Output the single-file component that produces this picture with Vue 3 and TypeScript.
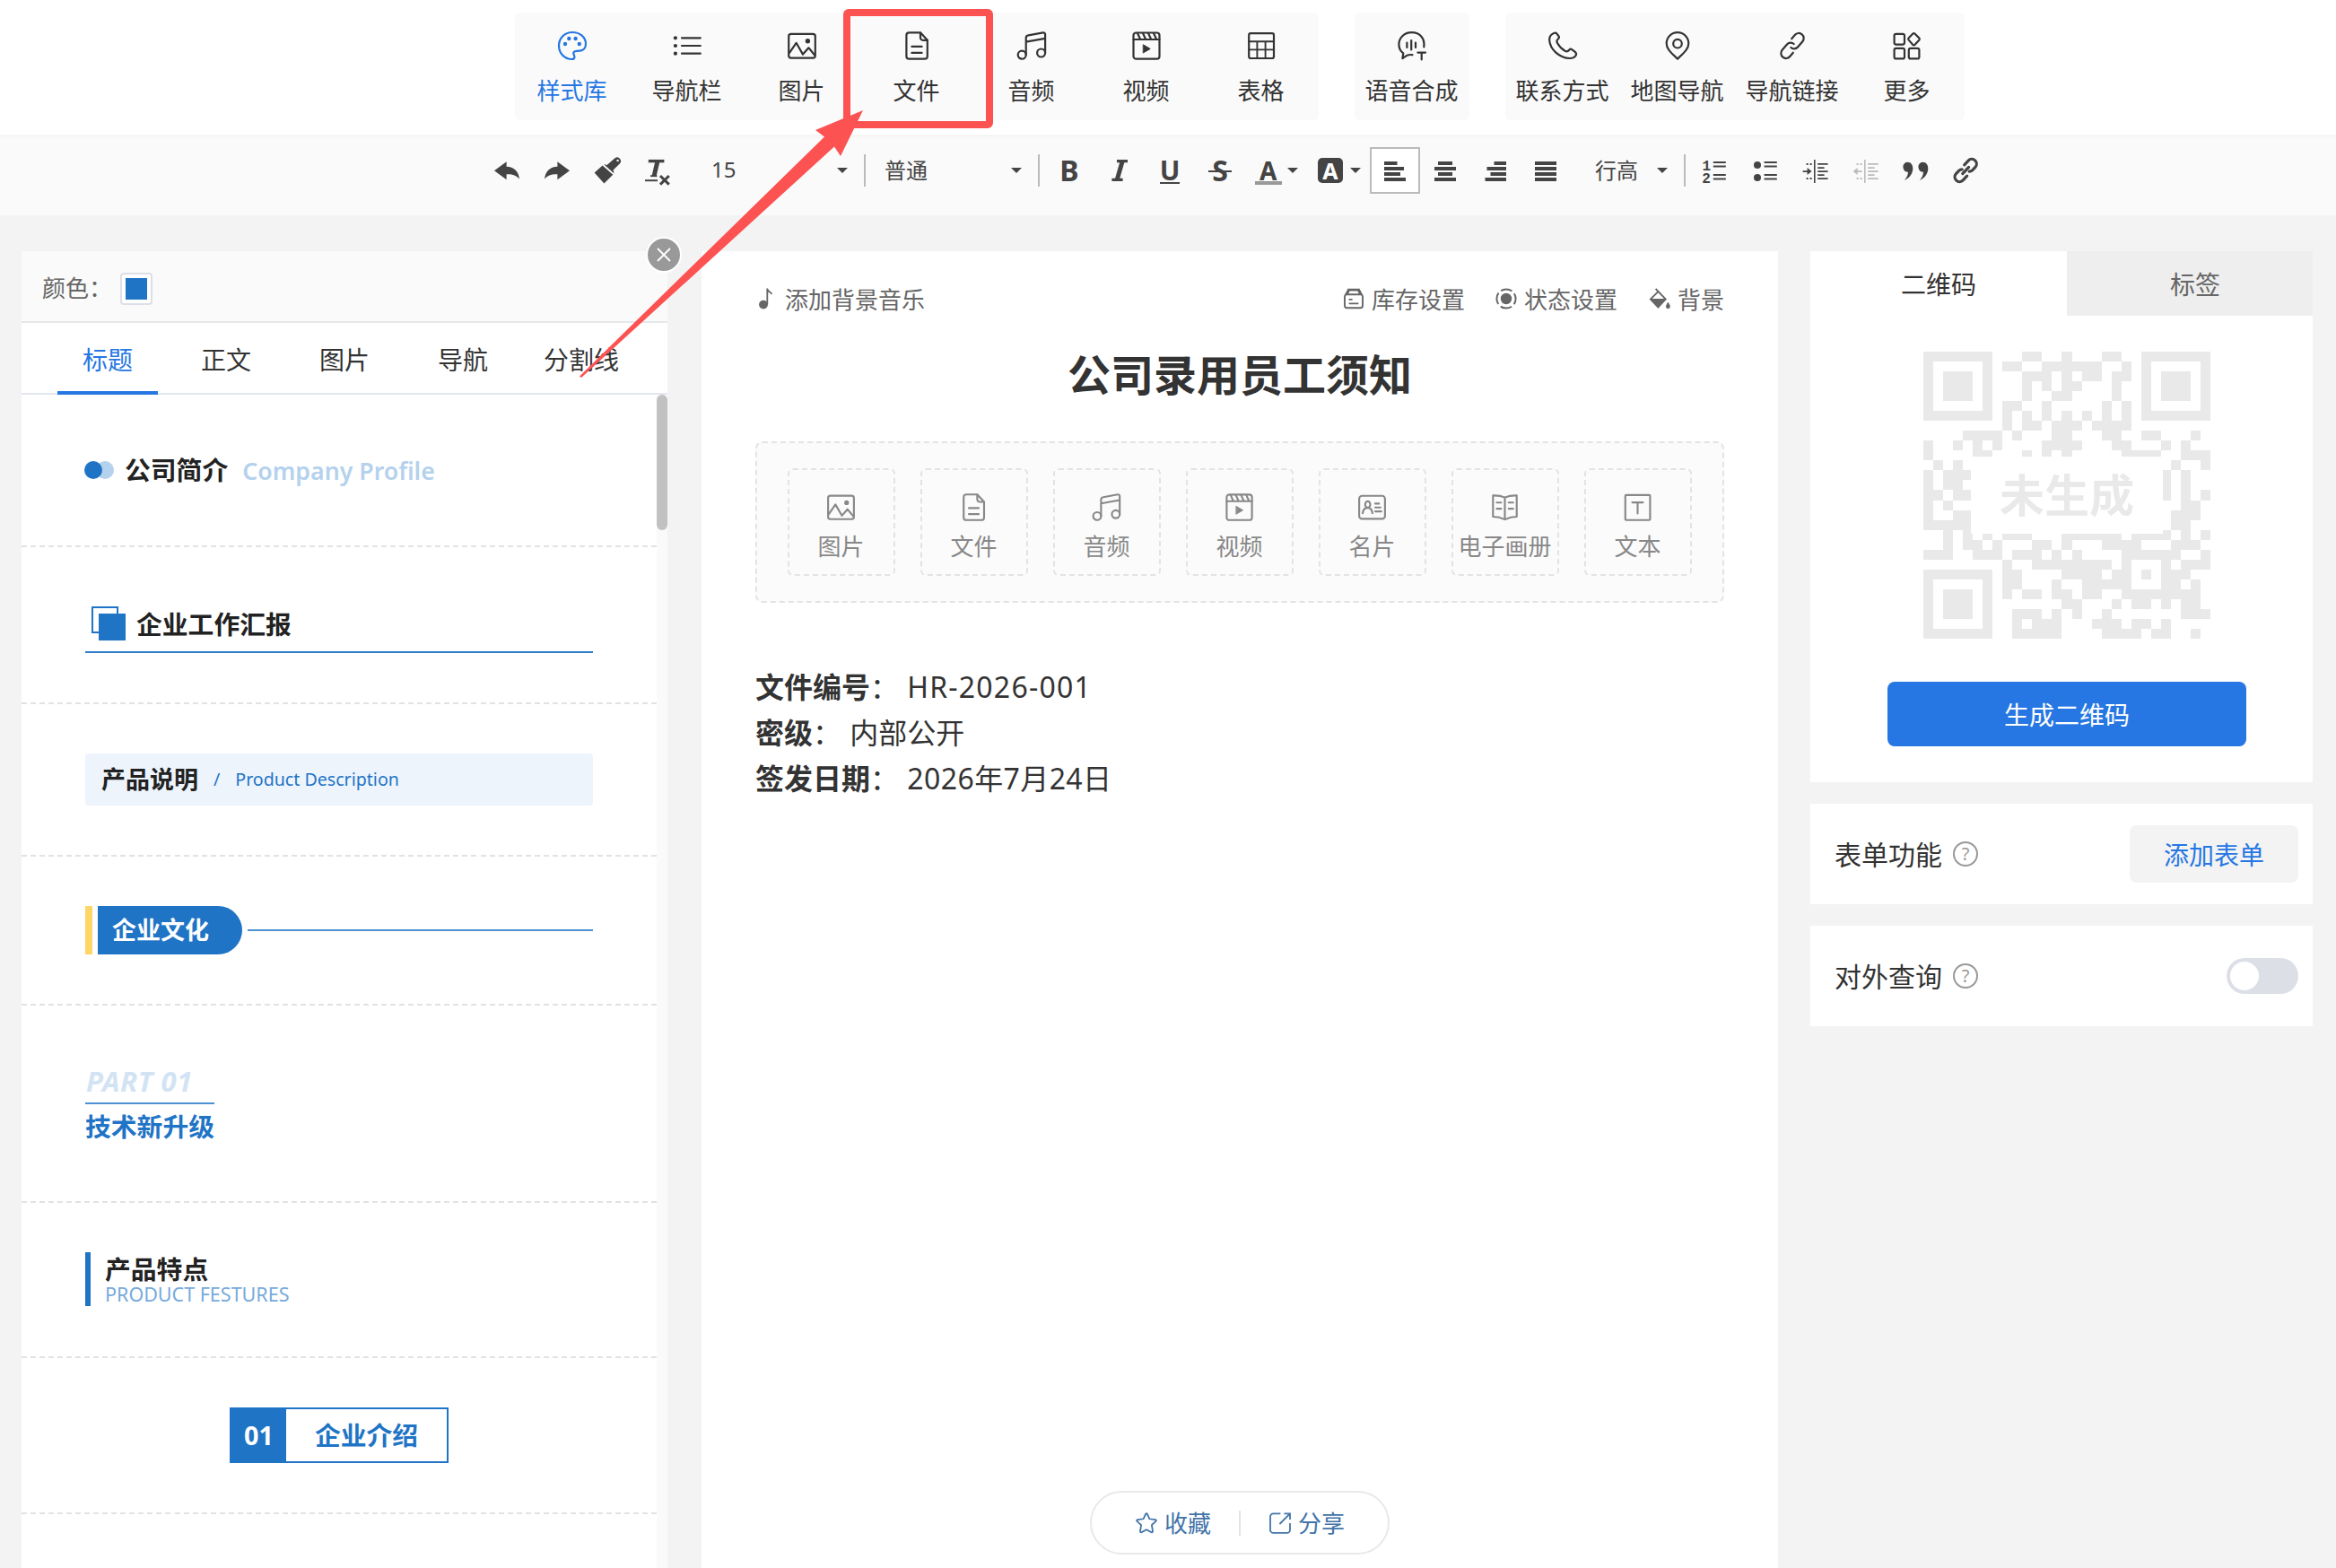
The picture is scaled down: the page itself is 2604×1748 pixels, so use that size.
<script setup lang="ts">
import { ref } from 'vue'

interface Tool { icon: string; label: string; active?: boolean }

const toolGroups: Tool[][] = [
  [
    { icon: 'palette', label: '样式库', active: true },
    { icon: 'list', label: '导航栏' },
    { icon: 'image', label: '图片' },
    { icon: 'file', label: '文件' },
    { icon: 'music', label: '音频' },
    { icon: 'video', label: '视频' },
    { icon: 'table', label: '表格' },
  ],
  [{ icon: 'voice', label: '语音合成' }],
  [
    { icon: 'phone', label: '联系方式' },
    { icon: 'pin', label: '地图导航' },
    { icon: 'link', label: '导航链接' },
    { icon: 'more', label: '更多' },
  ],
]

const blocks: Tool[] = [
  { icon: 'image', label: '图片' },
  { icon: 'file', label: '文件' },
  { icon: 'music', label: '音频' },
  { icon: 'video', label: '视频' },
  { icon: 'card', label: '名片' },
  { icon: 'book', label: '电子画册' },
  { icon: 'textbox', label: '文本' },
]

// Stroke icons on a 36 × 36 grid
const icons: Record<string, string> = {
  palette:
    '<path d="M17.5 33C9 33 3 26 3 18C3 9.5 9.5 3 18 3C26.5 3 33 8.5 33 16C33 21 29.5 23.4 26 23.6C22 23.8 19 24.4 19.3 26.5C19.6 28.5 20.6 29 20.4 31C20.2 32.3 19.2 33 17.5 33Z"/><g fill="currentColor" stroke="none"><circle cx="14.3" cy="10" r="2.2"/><circle cx="21.6" cy="10" r="2.2"/><circle cx="10" cy="16" r="2.2"/><circle cx="25.8" cy="16" r="2.2"/></g>',
  list: '<path d="M12 9.3H32.8M12 18H32.8M12 26.7H32.8"/><g fill="currentColor" stroke="none"><circle cx="4.9" cy="9.3" r="2.1"/><circle cx="4.9" cy="18" r="2.1"/><circle cx="4.9" cy="26.7" r="2.1"/></g>',
  image:
    '<rect x="3.2" y="4.8" width="29.6" height="26.8" rx="2.6"/><path d="M4.2 25.6L11.6 14.8L19 27.6L25.4 20.3L32 28.2"/><circle cx="24.4" cy="12.8" r="2.7" fill="currentColor" stroke="none"/>',
  file: '<path d="M22 3.3H9.4a3 3 0 0 0-3 3v23.4a3 3 0 0 0 3 3h17.4a3 3 0 0 0 3-3V11.8z"/><path d="M22 3.6V9a2.8 2.8 0 0 0 2.8 2.8h4.8M12.4 18.9H23.6M12.4 25.9H23.6"/>',
  music:
    '<circle cx="7.2" cy="28.2" r="4.5"/><circle cx="28.6" cy="26" r="4.5"/><path d="M11.7 28V9.4a3 3 0 0 1 2.6-3L30.8 3.4a2 2 0 0 1 2.3 2V26M11.7 13.6L33 9.8"/>',
  video:
    '<rect x="3.5" y="3.5" width="29" height="29.2" rx="3"/><path d="M3.5 11H32.5M8 4l3 6.5M14 4l3 6.5M20 4l3 6.5M26 4l3 6.5"/><path d="M14.6 17L22.2 21.4L14.6 25.8Z" fill="currentColor" stroke-width="1"/>',
  table:
    '<rect x="4.2" y="4.2" width="27.8" height="27.8" rx="2"/><path d="M4.2 13.2H32M4.2 22.4H32M13.4 13.2V32M22.6 13.2V32" stroke-width="1.9"/>',
  voice:
    '<path d="M31.3 19.3C32.5 10 27 3.2 17.6 3.2C9 3.2 3.4 9.5 3.4 16.5C3.4 20.5 5.2 24 8.3 26.4L7.4 32.2L12.6 28.7Q15.5 27.6 18.4 28.2M12.4 14.6v5.4M17.2 12v10.4M22 14.6v5.4"/><path d="M24.4 25.6H33M28.7 25.6V33.4"/>',
  phone:
    '<path d="M6.5 4.9C4 6.5 3 9 3.2 12C4 22 14 31.5 26 32C29 32 31.5 31 32.8 28.5C33.5 27 32.5 25.5 31.5 24.7L28.5 22.3C27.3 21.4 26 21.7 25.2 22.7C24 24.2 22.5 24.8 20.5 23.8C16.5 21.5 14 18.5 12 15C11 13 11.5 11.5 12.8 10.5C14 9.6 14.2 8.3 13.3 7L11.5 4.6C10.3 3.2 8.3 3.6 6.5 4.9Z"/>',
  pin: '<path d="M18 32.6C12 26.8 5.7 22 5.7 15.4a12.3 12.3 0 0 1 24.6 0C30.3 22 24 26.8 18 32.6Z"/><circle cx="18" cy="15.7" r="4.8"/>',
  link: '<g transform="rotate(-50 18 18)"><path d="M12.6 23.6H7a5.6 5.6 0 0 1 0-11.2H15a5.6 5.6 0 0 1 5.6 5.6M23.4 12.4H29a5.6 5.6 0 0 1 0 11.2H21a5.6 5.6 0 0 1-5.6-5.6"/></g>',
  more: '<rect x="3.6" y="4.8" width="11.4" height="11.8" rx="2"/><rect x="3.6" y="20.8" width="11.4" height="11.6" rx="2"/><rect x="19.8" y="20.8" width="11.6" height="11.6" rx="2"/><path d="M24.4 4.6a1.4 1.4 0 0 1 2 0L31.5 9.6a1.4 1.4 0 0 1 0 1.8L26.4 17a1.4 1.4 0 0 1-2 0L19.5 11.4a1.4 1.4 0 0 1 0-1.8Z"/>',
  card: '<rect x="3.2" y="4.9" width="29.6" height="26.4" rx="3.4"/><ellipse cx="13" cy="14.8" rx="2.9" ry="3.6"/><path d="M7.2 24.9C7.6 21 9.6 18.6 13 18.6C16.2 18.6 18 21 18.4 24.9M21.6 13.8H26M21.6 18.2H27.6M21.6 22.8H28.6"/>',
  book: '<path d="M18 6.8C14 5 9 4.3 4.4 4.5V28.8C9.5 28.8 14 30 18 32C22 30 26.5 28.8 31.6 28.8V4.5C27 4.3 22 5 18 6.8ZM18 6.8V32M8.6 12.6H13.8M8.6 19.6H13.8M22.4 12.6H27.6M22.4 19.6H27.6"/>',
  textbox:
    '<rect x="3.9" y="4" width="28.4" height="28.6" rx="1"/><path d="M11.8 12.4H24.2M18 12.4V25.2" />',
}

// Solid glyphs of the formatting bar on a 28 × 28 grid
const fmt: Record<string, string> = {
  undo: '<path d="M0 14.3L13.6 4.2V9.8C22 10 27 15 28 23.6C24.5 19.4 20 17.9 13.6 18.2V24.2Z"/>',
  redo: '<path d="M28 14.3L14.4 4.2V9.8C6 10 1 15 0 23.6C3.5 19.4 8 17.9 14.4 18.2V24.2Z"/>',
  brush:
    '<path d="M8.6 8.4L20.3 18.8L10.4 28.4L-.4 16.6Z"/><path d="M10 7L13.6 8L21.6 1Q24.5-2 27.6.4Q30.6 3.4 27.8 6.4L20.6 13.6L21.6 17.6Z"/><circle cx="25.6" cy="2.9" r="1.2" fill="#fafafa"/>',
  clear:
    '<path d="M3.8 3.6H21.4" fill="none" stroke="currentColor" stroke-width="3.4"/><path d="M14 3.6L10 20.6" fill="none" stroke="currentColor" stroke-width="5"/><path d="M6 20.2H13.4" fill="none" stroke="currentColor" stroke-width="1.8"/><path d="M0 25.2H14" fill="none" stroke="currentColor" stroke-width="2"/><path d="M17 20L26.8 29.6M26.8 20L17 29.6" fill="none" stroke="currentColor" stroke-width="3"/>',
  italic:
    '<path d="M11 3.7H23M5.4 24.4H17.6" fill="none" stroke="currentColor" stroke-width="3.2"/><path d="M17.2 3.6L11.2 24.4" fill="none" stroke="currentColor" stroke-width="5"/>',
  left: '<path d="M2 4H16.5V8H2ZM2 10H24V14H2ZM2 16H20V20H2ZM2 22H26V26H2Z"/>',
  center: '<path d="M6 4H22V8H6ZM2 10H26V14H2ZM6 16H22V20H6ZM2 22H26V26H2Z"/>',
  right: '<path d="M12.5 4H26V8H12.5ZM4.5 10H26V14H4.5ZM8.5 16H26V20H8.5ZM2.5 22H26V26H2.5Z"/>',
  justify: '<path d="M2 4H26V8H2ZM2 10H26V14H2ZM2 16H26V20H2ZM2 22H26V26H2Z"/>',
  ol: '<path d="M11.8 4H25.8V6H11.8ZM11.8 8.4H25.8V10.4H11.8ZM11.8 18H25.8V20H11.8ZM11.8 22.4H25.8V24.4H11.8Z"/><g font-family="Liberation Mono, monospace" font-weight="700" font-size="16"><text x="-0.4" y="14.2">1</text><text x="-0.8" y="28.2">2</text></g>',
  ul: '<circle cx="5" cy="8" r="4"/><circle cx="5" cy="22" r="4"/><path d="M12.6 4H26.8V6H12.6ZM12.6 8.4H26.8V10.4H12.6ZM12.6 18H26.8V20H12.6ZM12.6 22.4H26.8V24.4H12.6Z"/>',
  indent:
    '<path d="M12 2H13.6V28H12ZM16.2 6H27.6V7.8H16.2ZM16.2 10.2H23.6V12H16.2ZM16.2 14.2H27.6V16H16.2ZM16.2 18.2H23.6V20H16.2ZM16.2 22.2H27.6V24H16.2Z"/><path d="M-.4 14.2H4.6V11L9.6 15L4.6 19V16H-.4ZM3.6 6H5.6V8H3.6ZM7.6 6H9.6V8H7.6ZM3.6 22H5.6V24H3.6ZM7.6 22H9.6V24H7.6Z"/>',
  outdent:
    '<path d="M12 2H13.6V28H12ZM16.2 6H27.6V7.8H16.2ZM16.2 10.2H23.6V12H16.2ZM16.2 14.2H27.6V16H16.2ZM16.2 18.2H23.6V20H16.2ZM16.2 22.2H27.6V24H16.2Z"/><path d="M9.6 14.2H4.6V11L-.4 15L4.6 19V16H9.6ZM3.6 6H5.6V8H3.6ZM7.6 6H9.6V8H7.6ZM3.6 22H5.6V24H3.6ZM7.6 22H9.6V24H7.6Z"/>',
  quote:
    '<path d="M-.6 9.6a5 5 0 0 1 5-4.8c3.6 0 5.9 2.8 5.9 7c0 6.2-4 11-9.5 13.2c2.4-2.6 4-5.6 4.2-9.3c-3 .6-5.6-2.2-5.6-6.1Z"/><path d="M16.4 9.6a5 5 0 0 1 5-4.8c3.6 0 5.9 2.8 5.9 7c0 6.2-4 11-9.5 13.2c2.4-2.6 4-5.6 4.2-9.3c-3 .6-5.6-2.2-5.6-6.1Z"/>',
  chain:
    '<g transform="translate(-.8 0) rotate(-47 14 14)" fill="none" stroke="currentColor" stroke-width="3.2" stroke-linecap="round"><path d="M10.5 19.3H4a5.3 5.3 0 0 1 0-10.6H8.5a5.3 5.3 0 0 1 3.6 1.6M17.5 8.7H24a5.3 5.3 0 0 1 0 10.6H19.5a5.3 5.3 0 0 1-3.6-1.6M9 14H19"/></g>',
}

// Dark runs of each QR row as [first, last] module columns
const qrRuns: [number, number][][] = [
  [[10, 11], [14, 14], [18, 19]],
  [[8, 9], [12, 17], [20, 20]],
  [[10, 12], [14, 14], [16, 17], [19, 20]],
  [[10, 10], [12, 12], [14, 15], [19, 19]],
  [[10, 10], [13, 14], [19, 19]],
  [[8, 9], [12, 12], [18, 18], [20, 20]],
  [[8, 8], [10, 10], [12, 12], [14, 14], [16, 16], [18, 18], [20, 20]],
  [[8, 8], [10, 11], [13, 15], [17, 20]],
  [[4, 7], [9, 9], [13, 14], [18, 19], [22, 23], [27, 27]],
  [[0, 0], [3, 3], [5, 5], [7, 7], [12, 15], [19, 20], [24, 24], [26, 26]],
  [[0, 0], [5, 6], [10, 10], [12, 12], [14, 14], [20, 23], [26, 28]],
  [[1, 1], [3, 3], [25, 25], [28, 28]],
  [[0, 0], [2, 4], [24, 24], [26, 26]],
  [[0, 0], [2, 3], [24, 24], [26, 26]],
  [[0, 1], [3, 4], [24, 24], [26, 26], [28, 28]],
  [[0, 0], [2, 2], [26, 27]],
  [[0, 0], [3, 4], [25, 27]],
  [[0, 4], [25, 26]],
  [[2, 2], [4, 4], [6, 6], [8, 10], [14, 19], [21, 24], [26, 26], [28, 28]],
  [[2, 2], [4, 5], [7, 7], [11, 12], [14, 14], [18, 21], [25, 27]],
  [[0, 2], [5, 7], [9, 11], [13, 13], [15, 15], [20, 25], [28, 28]],
  [[8, 8], [11, 18], [20, 20], [24, 24], [26, 28]],
  [[8, 9], [14, 17], [19, 20], [22, 22], [24, 26]],
  [[8, 9], [13, 13], [16, 20], [24, 25], [27, 27]],
  [[8, 8], [10, 11], [13, 14], [16, 17], [20, 27]],
  [[14, 15], [19, 19], [21, 22], [24, 24], [26, 27]],
  [[9, 11], [13, 13], [15, 15], [18, 18], [26, 28]],
  [[9, 9], [11, 13], [17, 19], [21, 22], [24, 24]],
  [[9, 13], [18, 21], [23, 24], [27, 27]],
]
const finder = (x: number, y: number) =>
  `M${x} ${y}h7v7h-7zM${x + 1} ${y + 1}v5h5v-5zM${x + 2} ${y + 2}h3v3h-3z`
const qrPath =
  finder(0, 0) + finder(22, 0) + finder(0, 22) +
  qrRuns.map((row, y) => row.map(([a, b]) => `M${a} ${y}h${b - a + 1}v1h-${b - a + 1}z`).join('')).join('')

const styleTabs = ['标题', '正文', '图片', '导航', '分割线']
const activeTab = ref('标题')
const queryOn = ref(false)
</script>

<template>
  <div class="page">
    <header class="tools">
      <div v-for="(group, gi) in toolGroups" :key="gi" class="group">
        <div v-for="t in group" :key="t.label" class="tool" :class="{ active: t.active }">
          <svg class="ico" viewBox="0 0 36 36" v-html="icons[t.icon]"></svg>
          <span>{{ t.label }}</span>
        </div>
      </div>
    </header>

    <div class="format">
      <span v-for="n in ['undo', 'redo', 'brush', 'clear']" :key="n" class="cell"><svg class="f" viewBox="0 0 28 28" v-html="fmt[n]"></svg></span>
      <div class="select size"><span>15</span><i class="caret"></i></div>
      <i class="sep"></i>
      <div class="select para"><span>普通</span><i class="caret"></i></div>
      <i class="sep gap"></i>
      <span class="cell"><b class="glyph">B</b></span>
      <span class="cell"><svg class="f" viewBox="0 0 28 28" v-html="fmt.italic"></svg></span>
      <span class="cell"><b class="glyph u">U</b></span>
      <span class="cell"><b class="glyph s">S</b></span>
      <span class="cell color"><b class="glyph a">A</b><i class="caret"></i></span>
      <span class="cell back"><b class="abox">A</b><i class="caret"></i></span>
      <span v-for="n in ['left', 'center', 'right', 'justify']" :key="n" class="cell" :class="{ on: n === 'left' }"><svg class="f" viewBox="0 0 28 28" v-html="fmt[n]"></svg></span>
      <div class="select lh"><span>行高</span><i class="caret"></i></div>
      <i class="sep gap"></i>
      <span v-for="n in ['ol', 'ul', 'indent', 'outdent', 'quote', 'chain']" :key="n" class="cell" :class="{ off: n === 'outdent' }"><svg class="f" viewBox="0 0 28 28" v-html="fmt[n]"></svg></span>
    </div>

    <main class="body">
      <aside class="library">
        <div class="color-row"><span>颜色：</span><span class="swatch"><i></i></span></div>
        <button class="close" type="button">
          <svg viewBox="0 0 16 16"><path d="M1 1L15 15M15 1L1 15" /></svg>
        </button>
        <nav class="tabs">
          <span v-for="t in styleTabs" :key="t" :class="{ active: t === activeTab }" @click="activeTab = t">{{ t }}</span>
        </nav>
        <div class="scroll">
          <div class="list">
            <section class="st st1">
              <i class="dot"></i><i class="dot pale"></i>
              <b>公司简介</b><em>Company Profile</em>
            </section>
            <section class="st st2">
              <div class="bar">
                <svg viewBox="0 0 38 38"><rect x="1" y="1" width="28" height="28" fill="#fff" stroke="#1f74c6" stroke-width="2" /><rect x="8" y="8" width="30" height="30" fill="#1f74c6" /></svg>
                <b>企业工作汇报</b>
              </div>
            </section>
            <section class="st st3">
              <div class="bar"><b>产品说明</b><i>/</i><span>Product Description</span></div>
            </section>
            <section class="st st4"><i class="y"></i><b>企业文化</b><i class="l"></i></section>
            <section class="st st5">
              <div><em>PART 01</em><b>技术新升级</b></div>
            </section>
            <section class="st st6">
              <div><b>产品特点</b><span>PRODUCT FESTURES</span></div>
            </section>
            <section class="st st7">
              <div><b class="n">01</b><b class="t">企业介绍</b></div>
            </section>
          </div>
          <div class="track"><i></i></div>
        </div>
      </aside>

      <section class="editor">
        <div class="meta">
          <span class="m music">
            <svg viewBox="0 0 16 24"><ellipse cx="5" cy="18.6" rx="5" ry="4.8" /><path d="M8.4 18.6V.4H10C10.4 2.8 13 3.4 15.2 6.2L14 7.4C12.6 5.8 11.4 5 10.2 4.8V18.6Z" /></svg>添加背景音乐</span>
          <span class="m stock">
            <svg viewBox="0 0 24 24"><path d="M5.5.8H18.5L22 7.6H2Z" /><path d="M7.6 3.6H16.4L17.8 6.4H6.2Z" fill="#fff" /><rect x="2" y="7.4" width="20" height="14.8" rx="2.4" fill="none" stroke="currentColor" stroke-width="1.9" /><path d="M6.6 12H10.6V13.8H6.6ZM6.6 16.4H17.4V18.2H6.6Z" /></svg>库存设置</span>
          <span class="m state">
            <svg viewBox="0 0 24 24"><circle cx="12" cy="12" r="6.2" /><circle cx="12" cy="12" r="10.6" fill="none" stroke="currentColor" stroke-width="2" stroke-dasharray="13.05 3.6" stroke-dashoffset="6.52" /></svg>状态设置</span>
          <span class="m bg">
            <svg viewBox="0 0 24 24"><path d="M7.6 1L18.8 12.6L10.4 21.4L1.8 12.6L10.4 4.2" fill="none" stroke="currentColor" stroke-width="1.8" /><path d="M1.2 12H19.6L10.4 22.6Z" /><path d="M21.4 15.8C23 18.2 23.8 19.4 23.8 20.8a2.4 2.4 0 0 1-4.8 0C19 19.4 19.8 18.2 21.4 15.8Z" /></svg>背景</span>
        </div>
        <h1>公司录用员工须知</h1>
        <div class="blocks">
          <div v-for="b in blocks" :key="b.label" class="block">
            <svg class="ico" viewBox="0 0 36 36" v-html="icons[b.icon]"></svg>
            <span>{{ b.label }}</span>
          </div>
        </div>
        <div class="doc">
          <p><b>文件编号</b>：&nbsp;<span class="no">HR-2026-001</span></p>
          <p><b>密级</b>：&nbsp;<span class="level">内部公开</span></p>
          <p><b>签发日期</b>：&nbsp;<span class="date">2026年7月24日</span></p>
        </div>
        <div class="pill">
          <svg viewBox="0 0 24 24"><path d="M11.1 1.8Q12 .4 12.9 1.8L15.4 7.3L21.8 8.2Q23.6 8.6 22.4 10L17.9 14.2L19 20.9Q19 22.7 17.4 22.1L12 19.2L6.6 22.1Q5 22.7 5 20.9L6.1 14.2L1.6 10Q.4 8.6 2.2 8.2L8.6 7.3Z" /></svg>
          <span>收藏</span><i></i>
          <svg viewBox="0 0 24 24"><path d="M12.4 1.4H4.4a3.4 3.4 0 0 0-3.4 3.4V19.4a3.4 3.4 0 0 0 3.4 3.4H19.6a3.4 3.4 0 0 0 3.4-3.4V12M16.4 1.4H23V8M23 1.4L11.4 13" /></svg>
          <span>分享</span>
        </div>
      </section>

      <aside class="side">
        <div class="qr-tabs"><span class="active">二维码</span><span>标签</span></div>
        <div class="qr-card">
          <div class="qr">
            <svg viewBox="0 0 29 29" shape-rendering="crispEdges"><path :d="qrPath" fill="#e9e9e9" fill-rule="evenodd" /></svg>
            <span>未生成</span>
          </div>
          <button class="primary" type="button">生成二维码</button>
        </div>
        <div class="row"><span class="name">表单功能</span><i class="help">?</i><button type="button">添加表单</button></div>
        <div class="row"><span class="name">对外查询</span><i class="help">?</i><span class="switch" :class="{ on: queryOn }" @click="queryOn = !queryOn"></span></div>
      </aside>
    </main>

    <svg class="annotation" viewBox="0 0 2604 1748">
      <rect x="944" y="14" width="159" height="125" rx="2" fill="none" stroke="#fc5252" stroke-width="8" />
      <path d="M962 123L909 145L919 152.5L646 419.5L648 421L930 163.5L937 174Z" fill="#fc5252" />
    </svg>
  </div>
</template>

<style>
body {
  background: #f3f3f3;
  overflow: hidden;
}
</style>

<style scoped>
.page {
  position: relative;
  width: 2604px;
  height: 1748px;
  overflow: hidden;
  background: #f3f3f3;
  color: #333;
  font-family: "Noto Sans", "Noto Sans CJK SC", sans-serif;
  font-size: 26px;
  display: flex;
  flex-direction: column;
}
.page * {
  box-sizing: border-box;
}
i,
em {
  font-style: normal;
}
button {
  font: inherit;
  border: 0;
  padding: 0;
}
.ico {
  width: 36px;
  height: 36px;
  fill: none;
  stroke: currentColor;
  stroke-width: 2.2;
  stroke-linecap: round;
  stroke-linejoin: round;
}

.tools {
  flex: none;
  height: 150px;
  padding: 14px 0 0 574px;
  display: flex;
  gap: 40px;
  background: #fff;
}
.group {
  display: flex;
  height: 120px;
  border-radius: 6px;
  background: #fafafa;
}
.tool {
  width: 128px;
  padding-top: 19px;
  display: flex;
  flex-direction: column;
  align-items: center;
  white-space: nowrap;
}
.tool span {
  margin: 14px 1px 0 0;
  line-height: 36px;
}
.tool.active {
  color: #2677e3;
}

.format {
  flex: none;
  height: 90px;
  padding-left: 537px;
  padding-bottom: 10px;
  display: flex;
  align-items: center;
  background: linear-gradient(#f5f5f5, #fafafa 6px);
  color: #444;
  font-size: 24px;
}
.cell {
  width: 56px;
  height: 52px;
  display: flex;
  align-items: center;
  justify-content: center;
}
.cell.on {
  border: 2px solid #bbb;
  background: #fff;
}
.cell.off {
  color: #bbb;
}
.f {
  width: 28px;
  height: 28px;
  overflow: visible;
  fill: currentColor;
}
.caret {
  border: 6px solid transparent;
  border-top-color: currentColor;
  border-bottom: 0;
}
.sep {
  width: 2px;
  height: 36px;
  background: #bbb;
}
.sep.gap {
  margin-right: 5px;
}
.select {
  display: flex;
  align-items: center;
  justify-content: space-between;
}
.select span {
  padding-bottom: 3px;
}
.size {
  width: 202px;
  padding: 0 18px 0 32px;
}
.para {
  width: 192px;
  padding: 0 18px 0 21px;
}
.lh {
  width: 126px;
  padding: 0 18px 0 27px;
}
.glyph {
  position: relative;
  font-size: 32px;
  line-height: 40px;
}
.glyph.u {
  font-size: 30px;
  line-height: 44px;
}
.glyph.u::after,
.glyph.s::after,
.glyph.a::after {
  content: "";
  position: absolute;
  left: 50%;
  width: 22px;
  margin-left: -11px;
  top: 35px;
  height: 2px;
  background: currentColor;
}
.glyph.s::after {
  width: 26px;
  margin-left: -13px;
  top: 20px;
}
.glyph.a {
  font-size: 28px;
  line-height: 42px;
}
.glyph.a::after {
  width: 30px;
  margin-left: -15px;
  top: 33px;
  height: 4px;
  background: #999;
}
.color {
  width: 70px;
  padding-left: 16px;
  justify-content: flex-start;
  gap: 12px;
}
.back {
  width: 69px;
  padding-left: 11px;
  justify-content: flex-start;
  gap: 8px;
}
.abox {
  width: 28px;
  height: 28px;
  border-radius: 5px;
  background: #444;
  color: #fff;
  font-size: 25px;
  line-height: 28px;
  text-align: center;
}

.body {
  flex: 1;
  min-height: 0;
  padding: 40px 0 0 24px;
  display: flex;
  align-items: stretch;
}
.library {
  position: relative;
  width: 720px;
  display: flex;
  flex-direction: column;
}
.color-row {
  flex: none;
  height: 80px;
  padding: 1px 0 0 23px;
  border-bottom: 2px solid #e5e7e9;
  background: #fafafa;
  color: #666;
  display: flex;
  align-items: center;
}
.color-row > span:first-child {
  width: 87px;
}
.swatch {
  width: 36px;
  height: 36px;
  margin-top: 4px;
  padding: 4px;
  border: 2px solid #dcdfe6;
  border-radius: 4px;
  background: #fff;
}
.swatch i {
  display: block;
  height: 24px;
  background: #1f74c6;
}
.close {
  position: absolute;
  left: 696px;
  top: -16px;
  width: 40px;
  height: 40px;
  border: 2px solid #fff;
  border-radius: 50%;
  background: #999;
  display: flex;
  align-items: center;
  justify-content: center;
}
.close svg {
  width: 16px;
  height: 16px;
  stroke: #fff;
  stroke-width: 1.8;
}
.tabs {
  flex: none;
  height: 80px;
  padding-left: 30px;
  display: flex;
  background: #fff;
  border-bottom: 2px solid #e4e7ed;
  font-size: 28px;
}
.tabs span {
  width: 132px;
  height: 80px;
  line-height: 82px;
  text-align: center;
}
.tabs .active {
  color: #2677e3;
  background: linear-gradient(#2677e3, #2677e3) center bottom / 112px 4px no-repeat;
}
.scroll {
  flex: 1;
  min-height: 0;
  display: flex;
}
.list {
  width: 708px;
  overflow: hidden;
  background: #fff;
}
.track {
  width: 12px;
  background: #fafafa;
}
.track i {
  display: block;
  height: 151px;
  border-radius: 6px;
  background: #c1c1c1;
}
.st {
  display: flex;
  align-items: center;
  padding: 0 71px;
  color: #222;
  font-size: 28.8px;
  background: repeating-linear-gradient(90deg, #e2e2e2 0 6px, transparent 6px 10.03px) left bottom / 100% 2px no-repeat;
}
.st b {
  line-height: 40px;
  white-space: nowrap;
}
.st1 {
  height: 170px;
  padding: 0 70px 2px;
}
.dot {
  position: relative;
  z-index: 1;
  width: 20px;
  height: 20px;
  border-radius: 50%;
  background: #1f74c6;
}
.dot.pale {
  z-index: 0;
  margin: 0 12px 0 -7px;
  background: #b4d1ed;
}
.st1 em {
  margin-left: 16px;
  color: #b4d1ed;
  font-size: 26.7px;
  font-weight: 600;
}
.st2 {
  height: 175px;
}
.st2 .bar {
  width: 567px;
  height: 57px;
  margin-top: 3px;
  padding: 1px 0 6px 7px;
  border-bottom: 2px solid #2f7ecb;
  display: flex;
  align-items: center;
}
.st2 svg {
  width: 38px;
  height: 38px;
  margin: -2px 12px 0 0;
}
.st3 {
  height: 170px;
  padding-bottom: 2px;
}
.st3 .bar {
  width: 567px;
  height: 58px;
  padding: 0 0 1px 18px;
  border-radius: 4px;
  background: #edf4fc;
  color: #1f74c6;
  font-size: 19.6px;
  display: flex;
  align-items: center;
}
.st3 b {
  color: #222;
  font-size: 27px;
}
.st3 i {
  margin: 0 17px 0 17px;
}
.st4 {
  height: 166px;
  padding-bottom: 2px;
}
.st4 .y {
  width: 8px;
  height: 54px;
  background: #ffd666;
}
.st4 b {
  width: 161px;
  height: 54px;
  margin: 0 6px;
  padding-left: 16px;
  border-radius: 0 27px 27px 0;
  background: #1f74c6;
  color: #fff;
  font-size: 27px;
  line-height: 54px;
}
.st4 .l {
  flex: 1;
  height: 2px;
  background: #4c92d3;
}
.st5 {
  height: 220px;
  color: #1f74c6;
}
.st5 div {
  display: flex;
  flex-direction: column;
}
.st5 em {
  height: 44px;
  padding-left: 1px;
  border-bottom: 2px solid #4c92d3;
  color: #d2e3f4;
  font-size: 31px;
  font-style: italic;
  font-weight: 700;
  letter-spacing: 0.6px;
  line-height: 36px;
}
.st5 b {
  margin-top: 5px;
}
.st6 {
  height: 173px;
  padding-bottom: 3px;
}
.st6 div {
  height: 60px;
  padding-left: 16px;
  border-left: 6px solid #1f74c6;
  display: flex;
  flex-direction: column;
}
.st6 b {
  line-height: 38px;
}
.st6 span {
  margin-top: -4px;
  color: #76aadc;
  font-size: 21.5px;
  line-height: 26px;
}
.st7 {
  height: 174px;
  padding-bottom: 2px;
  justify-content: center;
}
.st7 div {
  width: 244px;
  height: 62px;
  border: 2px solid #1f74c6;
  display: flex;
  text-align: center;
}
.st7 b {
  line-height: 57px;
}
.st7 .n {
  width: 61px;
  background: #1f74c6;
  color: #fff;
}
.st7 .t {
  flex: 1;
  color: #1f74c6;
}

.editor {
  position: relative;
  width: 1200px;
  margin: 0 36px 0 38px;
  padding: 34px 60px 0;
  background: #fff;
}
.meta {
  display: flex;
  height: 38px;
  color: #666;
}
.m {
  display: flex;
  align-items: center;
  white-space: nowrap;
}
.m svg {
  width: 24px;
  height: 24px;
  margin-right: 8px;
  fill: currentColor;
}
.m.music svg {
  width: 16px;
  margin: 0 13px 0 4px;
}
.m.stock {
  margin-left: auto;
}
.m.bg {
  margin-left: 35px;
}
.m.state {
  margin-left: 34px;
}
h1 {
  margin: 28px 0 0;
  height: 76px;
  font-size: 48px;
  line-height: 76px;
  text-align: center;
}
.blocks {
  height: 180px;
  margin-top: 36px;
  padding: 28px 34px;
  display: flex;
  gap: 28px;
  border: 2px dashed #e3e3e3;
  border-radius: 8px;
  background: #fbfbfb;
}
.block {
  width: 120px;
  height: 120px;
  padding-top: 24px;
  border: 2px dashed #e3e3e3;
  border-radius: 6px;
  color: #888;
  display: flex;
  flex-direction: column;
  align-items: center;
  white-space: nowrap;
}
.block .ico {
  width: 35px;
  height: 35px;
  margin-right: 1px;
}
.block span {
  margin: 8px 1px 0 0;
  line-height: 36px;
}
.doc {
  margin-top: 68px;
  font-size: 32px;
}
.doc p {
  margin: 0;
  height: 51.2px;
  line-height: 51.2px;
}
.no {
  margin-left: 1px;
  letter-spacing: 1.2px;
}
.level {
  margin-left: 1px;
}
.date {
  margin-left: 1px;
  letter-spacing: 0.4px;
}
.pill {
  position: absolute;
  left: 433px;
  top: 1382px;
  width: 334px;
  height: 71px;
  padding-left: 49px;
  border: 2px solid #e8e8e8;
  border-radius: 36px;
  background: #fff;
  color: #4274a8;
  display: flex;
  align-items: center;
}
.pill svg {
  width: 24px;
  height: 24px;
  margin-right: 8px;
  fill: none;
  stroke: currentColor;
  stroke-width: 1.8;
}
.pill span {
  padding-bottom: 2px;
}
.pill i {
  width: 2px;
  height: 28px;
  margin: 0 32px 0 31px;
  background: #e3e3e3;
}

.side {
  width: 560px;
}
.qr-tabs {
  display: flex;
  height: 72px;
  font-size: 28px;
  line-height: 75px;
  text-align: center;
}
.qr-tabs span {
  flex: 0 0 274px;
  padding-left: 12px;
  background: #eeeeee;
  color: #666;
}
.qr-tabs .active {
  flex: 0 0 286px;
  padding: 0;
  background: #fff;
  color: #333;
}
.qr-card {
  height: 520px;
  padding-top: 40px;
  background: #fff;
  display: flex;
  flex-direction: column;
  align-items: center;
}
.qr {
  position: relative;
  width: 320px;
  height: 320px;
  margin-left: 12px;
}
.qr svg {
  display: block;
  width: 320px;
  height: 320px;
}
.qr span {
  position: absolute;
  left: 53px;
  top: 117px;
  width: 214px;
  height: 86px;
  background: #fff;
  color: #e9e9e9;
  font-size: 50px;
  font-weight: 700;
  line-height: 87px;
  text-align: center;
}
.primary {
  width: 400px;
  height: 72px;
  margin: 48px 0 0 12px;
  border-radius: 8px;
  background: #2677e3;
  color: #fff;
  font-size: 28px;
}
.row {
  height: 112px;
  margin-top: 24px;
  padding: 0 16px 0 27px;
  display: flex;
  align-items: center;
  background: #fff;
  font-size: 30px;
}
.name {
  padding-bottom: 3px;
}
.help {
  width: 28px;
  height: 28px;
  margin-left: 12px;
  border: 2px solid #999;
  border-radius: 50%;
  color: #999;
  font-size: 20px;
  line-height: 24px;
  text-align: center;
}
.row button {
  width: 188px;
  height: 64px;
  margin-left: auto;
  border-radius: 8px;
  background: #f3f3f3;
  color: #2677e3;
  font-size: 28px;
}
.switch {
  width: 80px;
  height: 40px;
  margin-left: auto;
  padding: 4px;
  border-radius: 20px;
  background: #dcdfe6;
}
.switch::before {
  content: "";
  display: block;
  width: 32px;
  height: 32px;
  border-radius: 50%;
  background: #fff;
}
.switch.on::before {
  margin-left: 40px;
}
.annotation {
  position: absolute;
  left: 0;
  top: 0;
  width: 2604px;
  height: 1748px;
  pointer-events: none;
}
</style>
